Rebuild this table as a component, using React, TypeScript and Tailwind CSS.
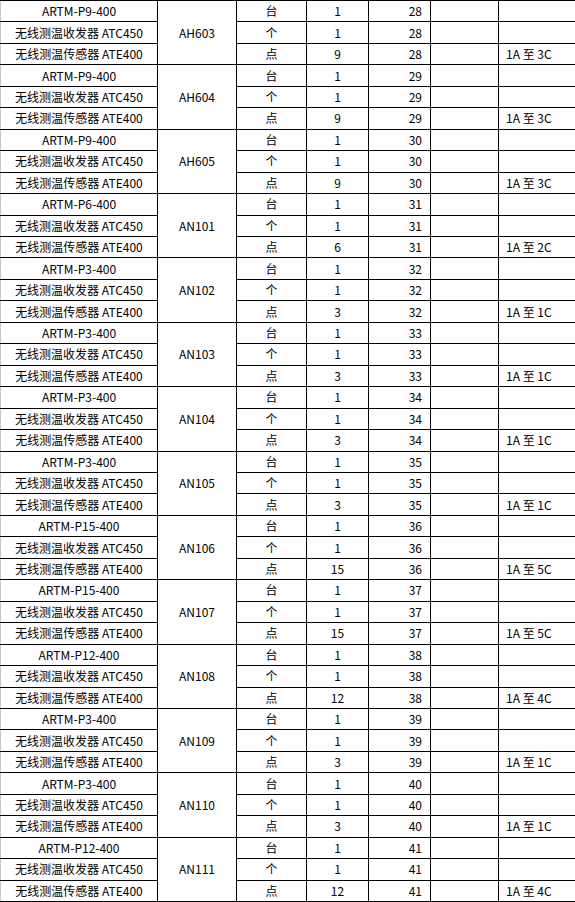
const groups = [
  { model: "ARTM-P9-400", code: "AH603", n: 9, no: 28, range: "1A 至 3C" },
  { model: "ARTM-P9-400", code: "AH604", n: 9, no: 29, range: "1A 至 3C" },
  { model: "ARTM-P9-400", code: "AH605", n: 9, no: 30, range: "1A 至 3C" },
  { model: "ARTM-P6-400", code: "AN101", n: 6, no: 31, range: "1A 至 2C" },
  { model: "ARTM-P3-400", code: "AN102", n: 3, no: 32, range: "1A 至 1C" },
  { model: "ARTM-P3-400", code: "AN103", n: 3, no: 33, range: "1A 至 1C" },
  { model: "ARTM-P3-400", code: "AN104", n: 3, no: 34, range: "1A 至 1C" },
  { model: "ARTM-P3-400", code: "AN105", n: 3, no: 35, range: "1A 至 1C" },
  { model: "ARTM-P15-400", code: "AN106", n: 15, no: 36, range: "1A 至 5C" },
  { model: "ARTM-P15-400", code: "AN107", n: 15, no: 37, range: "1A 至 5C" },
  { model: "ARTM-P12-400", code: "AN108", n: 12, no: 38, range: "1A 至 4C" },
  { model: "ARTM-P3-400", code: "AN109", n: 3, no: 39, range: "1A 至 1C" },
  { model: "ARTM-P3-400", code: "AN110", n: 3, no: 40, range: "1A 至 1C" },
  { model: "ARTM-P12-400", code: "AN111", n: 12, no: 41, range: "1A 至 4C" },
];

const cell = "border border-black p-0 leading-none";
const first = "border border-black border-l-[#c8c8c8] border-l-dotted p-0 leading-none text-center";
const last = "border border-black border-r-[#c8c8c8] border-r-dotted p-0 pl-[7px] leading-none text-left";

export default function App() {
  return (
    <div className="w-[575px] h-[902px] bg-white overflow-hidden text-black text-[12px] [font-family:'Noto_Sans_CJK_SC','Liberation_Sans',sans-serif]">
      <table className="w-[575px] table-fixed border-collapse">
        <colgroup>
          <col className="w-[157px]" />
          <col className="w-[79px]" />
          <col className="w-[70px]" />
          <col className="w-[62px]" />
          <col className="w-[62px]" />
          <col className="w-[68px]" />
          <col className="w-[77px]" />
        </colgroup>
        <tbody>
          {groups.map((g) => (
            <>
              <tr key={g.code + "a"} className="h-[21.46px]">
                <td className={first}>{g.model}</td>
                <td rowSpan={3} className={cell + " text-center align-middle"}>{g.code}</td>
                <td className={cell + " text-center"}>台</td>
                <td className={cell + " text-center"}>1</td>
                <td className={cell + " text-right pr-[8px]"}>{g.no}</td>
                <td className={cell}></td>
                <td className={last}></td>
              </tr>
              <tr key={g.code + "b"} className="h-[21.46px]">
                <td className={first}>无线测温收发器 ATC450</td>
                <td className={cell + " text-center"}>个</td>
                <td className={cell + " text-center"}>1</td>
                <td className={cell + " text-right pr-[8px]"}>{g.no}</td>
                <td className={cell}></td>
                <td className={last}></td>
              </tr>
              <tr key={g.code + "c"} className="h-[21.46px]">
                <td className={first}>无线测温传感器 ATE400</td>
                <td className={cell + " text-center"}>点</td>
                <td className={cell + " text-center"}>{g.n}</td>
                <td className={cell + " text-right pr-[8px]"}>{g.no}</td>
                <td className={cell}></td>
                <td className={last}>{g.range}</td>
              </tr>
            </>
          ))}
        </tbody>
      </table>
    </div>
  );
}
